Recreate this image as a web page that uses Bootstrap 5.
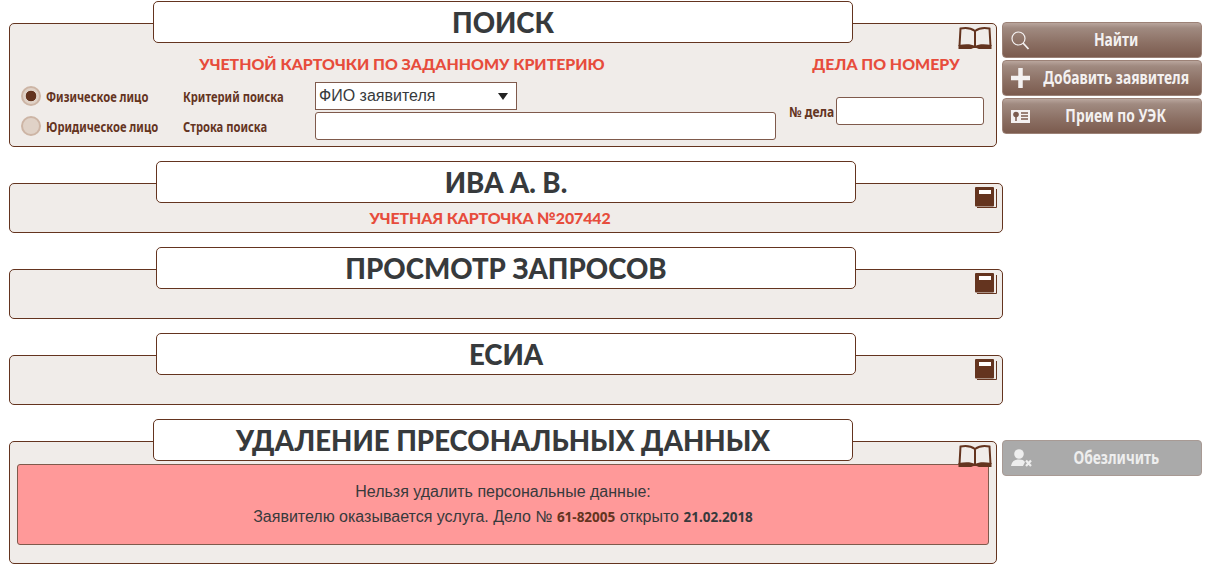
<!DOCTYPE html>
<html lang="ru"><head><meta charset="utf-8"><title>Поиск</title>
<link href="https://cdn.jsdelivr.net/npm/bootstrap@5.3.0/dist/css/bootstrap.min.css" rel="stylesheet">
<style>
html,body{height:566px;overflow:hidden;background:#fff}
body{font-family:"Liberation Sans",sans-serif;font-size:16px;color:#373a3c}
.page-wrap{padding:23px 4px 0 9px;width:1206px}
.sect{display:flex;gap:5px;margin-bottom:36px;align-items:flex-start}
.sect:last-child{margin-bottom:0}
.pane{position:relative;background:#f0ece9;border:1px solid #64341f;border-radius:5px;flex:none}
.pane-n{width:988px}
.pane-w{width:994px;height:50px}
.pane-title{position:absolute;top:-23px;left:143px;width:700px;height:42px;background:#fff;border:1px solid #64341f;border-radius:5px;text-align:center;font:900 27.6px/42px Lato,sans-serif;color:#373a3c}
.pane-w .pane-title{left:146px}
.tgl{position:absolute;top:2px;right:4px;line-height:0}
.sub{font:900 15.9px/20px Lato,sans-serif;color:#e74c3c;text-align:center;white-space:nowrap}
.search-left{width:767px;padding:30px 0 0 11px}
.search-left .sub{padding-left:7px}
.search-right{width:221px;padding:30px 0 0 0}
.sub-card{padding:24px 32px 0 0;letter-spacing:-.1px}
.fgrid{display:grid;grid-template-columns:162px 132px 461px;grid-auto-rows:28px;row-gap:2px;margin-top:8px;align-items:center}
.lbl{font:700 14px/18px "Noto Sans",sans-serif;color:#64341f;white-space:nowrap}
.nar{display:inline-block;transform:scaleX(.8);transform-origin:0 50%;white-space:nowrap;padding-top:2px}
.nar-r{transform-origin:100% 50%;transform:scaleX(.86)}
.form-check-input.rad{width:20px;height:20px;margin:0 5px 0 0;background:#e0d2c7;border:2px solid #cdb5a5;flex:none}
.form-check-input.rad:checked{background:#e0d2c7 radial-gradient(circle,#64341f 0 5px,transparent 5.6px)}
.form-control.fld{height:28px;padding:0 4px;border:1px solid #7f5a4c;border-radius:3px;font-size:16px;box-shadow:none}
.form-select.fld2{width:202px;height:28px;padding:0 3px;border:1px solid #7f5a4c;border-radius:0;font-size:16px;color:#373a3c;background-size:10px 7px;background-position:right 8px center;background-image:url("data:image/svg+xml,%3Csvg xmlns='http://www.w3.org/2000/svg' viewBox='0 0 10 7'%3E%3Cpath d='M0 0h10L5 7z' fill='%23222'/%3E%3C/svg%3E")}
.num-row{display:flex;align-items:center;justify-content:flex-end;gap:2px;margin:23px 12px 0 0}
.num-row .fld{width:148px;flex:none}
.side{width:200px;display:flex;flex-direction:column;gap:2px;margin-top:-1px;flex:none}
.act{display:flex;align-items:center;height:36px;width:100%;padding:0 4px 0 8px;border:1px solid #9c8277;border-radius:4px;background:linear-gradient(#b9a69d 0,#a08a80 15%,#8b6f63 60%,#7b5b4e 100%);color:#f4f1f1;font:700 17.5px/20px "Noto Sans",sans-serif}
.act:hover,.act:active{background:linear-gradient(#b9a69d 0,#a08a80 15%,#8b6f63 60%,#7b5b4e 100%);color:#f4f1f1;border-color:#9c8277}
.act svg{flex:none;width:24px}
.act-txt{flex:1;min-width:0;display:flex;justify-content:center;padding-bottom:2px}
.act-txt .nar{flex:none;transform-origin:50% 50%;transform:scaleX(.79);padding-top:0}
.act.off,.act.off:disabled{background:#aaa;border-color:#a89a94;color:#eee;opacity:1}
.warn{margin:22px 7px 18px 7px;height:81px;padding-top:14px;background:#ff9999;border:1px solid #7f5a4c;border-radius:3px;text-align:center;color:#373a3c;font-size:16px;line-height:25px}
.warn b{font:700 13.500px "Noto Sans",sans-serif;color:#64341f}
.warn b.dk{color:#373a3c}
</style></head><body>
<div class="page-wrap">
<div class="sect">
 <div class="pane pane-n d-flex" style="height:124px">
  <div class="pane-title">ПОИСК</div>
  <div class="tgl"><svg width="34" height="24" viewBox="0 0 34 24"><path d="M17 5C13 2 7 1.500 2.500 2.500L1.500 20M17 5C21 2 27 1.500 31.500 2.500L32.500 20M17 5V20" fill="none" stroke="#64341f" stroke-width="2"/><path d="M0.500 19C8 18 13 18 17 20C21 18 26 18 33.500 19V23H21C19 21.500 15 21.500 13 23H0.500Z" fill="#64341f"/></svg></div>
  <div class="search-left">
   <div class="sub">УЧЕТНОЙ КАРТОЧКИ ПО ЗАДАННОМУ КРИТЕРИЮ</div>
   <div class="fgrid">
    <label class="d-flex align-items-center lbl"><input class="form-check-input rad" type="radio" name="t" checked><span class="nar">Физическое лицо</span></label>
    <span class="lbl"><span class="nar">Критерий поиска</span></span>
    <select class="form-select fld2"><option>ФИО заявителя</option></select>
    <label class="d-flex align-items-center lbl"><input class="form-check-input rad" type="radio" name="t"><span class="nar">Юридическое лицо</span></label>
    <span class="lbl"><span class="nar">Строка поиска</span></span>
    <input class="form-control fld" type="text">
   </div>
  </div>
  <div class="search-right">
   <div class="sub">ДЕЛА ПО НОМЕРУ</div>
   <div class="num-row"><span class="lbl"><span class="nar nar-r">№ дела</span></span><input class="form-control fld" type="text"></div>
  </div>
 </div>
 <div class="side">
  <button class="btn act" type="button"><svg height="20" viewBox="0 0 24 20"><circle cx="7.500" cy="8.500" r="6.500" fill="none" stroke="#f4f1f1" stroke-width="1.200"/><path d="M12 13l5.500 6" stroke="#f4f1f1" stroke-width="1.800"/></svg><span class="act-txt"><span class="nar">Найти</span></span></button>
  <button class="btn act" type="button"><svg height="20" viewBox="0 0 24 20"><path d="M0 10h19M9.500 0v20" stroke="#f4f1f1" stroke-width="4.500"/></svg><span class="act-txt"><span class="nar">Добавить заявителя</span></span></button>
  <button class="btn act" type="button"><svg height="20" viewBox="0 0 24 20"><rect x="0" y="4" width="19" height="13" fill="#f4f1f1"/><circle cx="5" cy="8.500" r="2.800" fill="#7b5b4e"/><path d="M5 11v4M10 7h7M10 10h7M10 13h7" stroke="#7b5b4e" stroke-width="1.500"/></svg><span class="act-txt"><span class="nar">Прием по УЭК</span></span></button>
 </div>
</div>
<div class="sect"><div class="pane pane-w"><div class="pane-title">ИВА А. В.</div>
 <div class="tgl"><svg width="24" height="22" viewBox="0 0 24 22"><path d="M22.500 3V21.500H3" fill="none" stroke="#64341f"/><rect x="1" y="1" width="19" height="19.500" rx="1" fill="#64341f"/><rect x="5" y="4" width="12" height="4" fill="#fff"/></svg></div>
 <div class="sub sub-card">УЧЕТНАЯ КАРТОЧКА №207442</div></div></div>
<div class="sect"><div class="pane pane-w"><div class="pane-title">ПРОСМОТР ЗАПРОСОВ</div>
 <div class="tgl"><svg width="24" height="22" viewBox="0 0 24 22"><path d="M22.500 3V21.500H3" fill="none" stroke="#64341f"/><rect x="1" y="1" width="19" height="19.500" rx="1" fill="#64341f"/><rect x="5" y="4" width="12" height="4" fill="#fff"/></svg></div></div></div>
<div class="sect"><div class="pane pane-w"><div class="pane-title">ЕСИА</div>
 <div class="tgl"><svg width="24" height="22" viewBox="0 0 24 22"><path d="M22.500 3V21.500H3" fill="none" stroke="#64341f"/><rect x="1" y="1" width="19" height="19.500" rx="1" fill="#64341f"/><rect x="5" y="4" width="12" height="4" fill="#fff"/></svg></div></div></div>
<div class="sect"><div class="pane pane-n"><div class="pane-title">УДАЛЕНИЕ ПРЕСОНАЛЬНЫХ ДАННЫХ</div>
 <div class="tgl"><svg width="34" height="24" viewBox="0 0 34 24"><path d="M17 5C13 2 7 1.500 2.500 2.500L1.500 20M17 5C21 2 27 1.500 31.500 2.500L32.500 20M17 5V20" fill="none" stroke="#64341f" stroke-width="2"/><path d="M0.500 19C8 18 13 18 17 20C21 18 26 18 33.500 19V23H21C19 21.500 15 21.500 13 23H0.500Z" fill="#64341f"/></svg></div>
 <div class="warn">Нельзя удалить персональные данные:<br>Заявителю оказывается услуга. Дело № <b>61-82005</b> открыто <b class="dk">21.02.2018</b></div></div>
 <div class="side"><button class="btn act off" type="button" disabled><svg height="20" viewBox="0 0 24 20"><circle cx="8" cy="6" r="4.800" fill="#eee"/><path d="M0 18c1-5 4-6.500 8-6.500c3 0 5 .8 6 2.500l-2 4z" fill="#eee"/><path d="M15 12.500l5 5.500M20 12.500l-5 5.500" stroke="#eee" stroke-width="2.200"/></svg><span class="act-txt"><span class="nar">Обезличить</span></span></button></div>
</div>
</div>
</body></html>
